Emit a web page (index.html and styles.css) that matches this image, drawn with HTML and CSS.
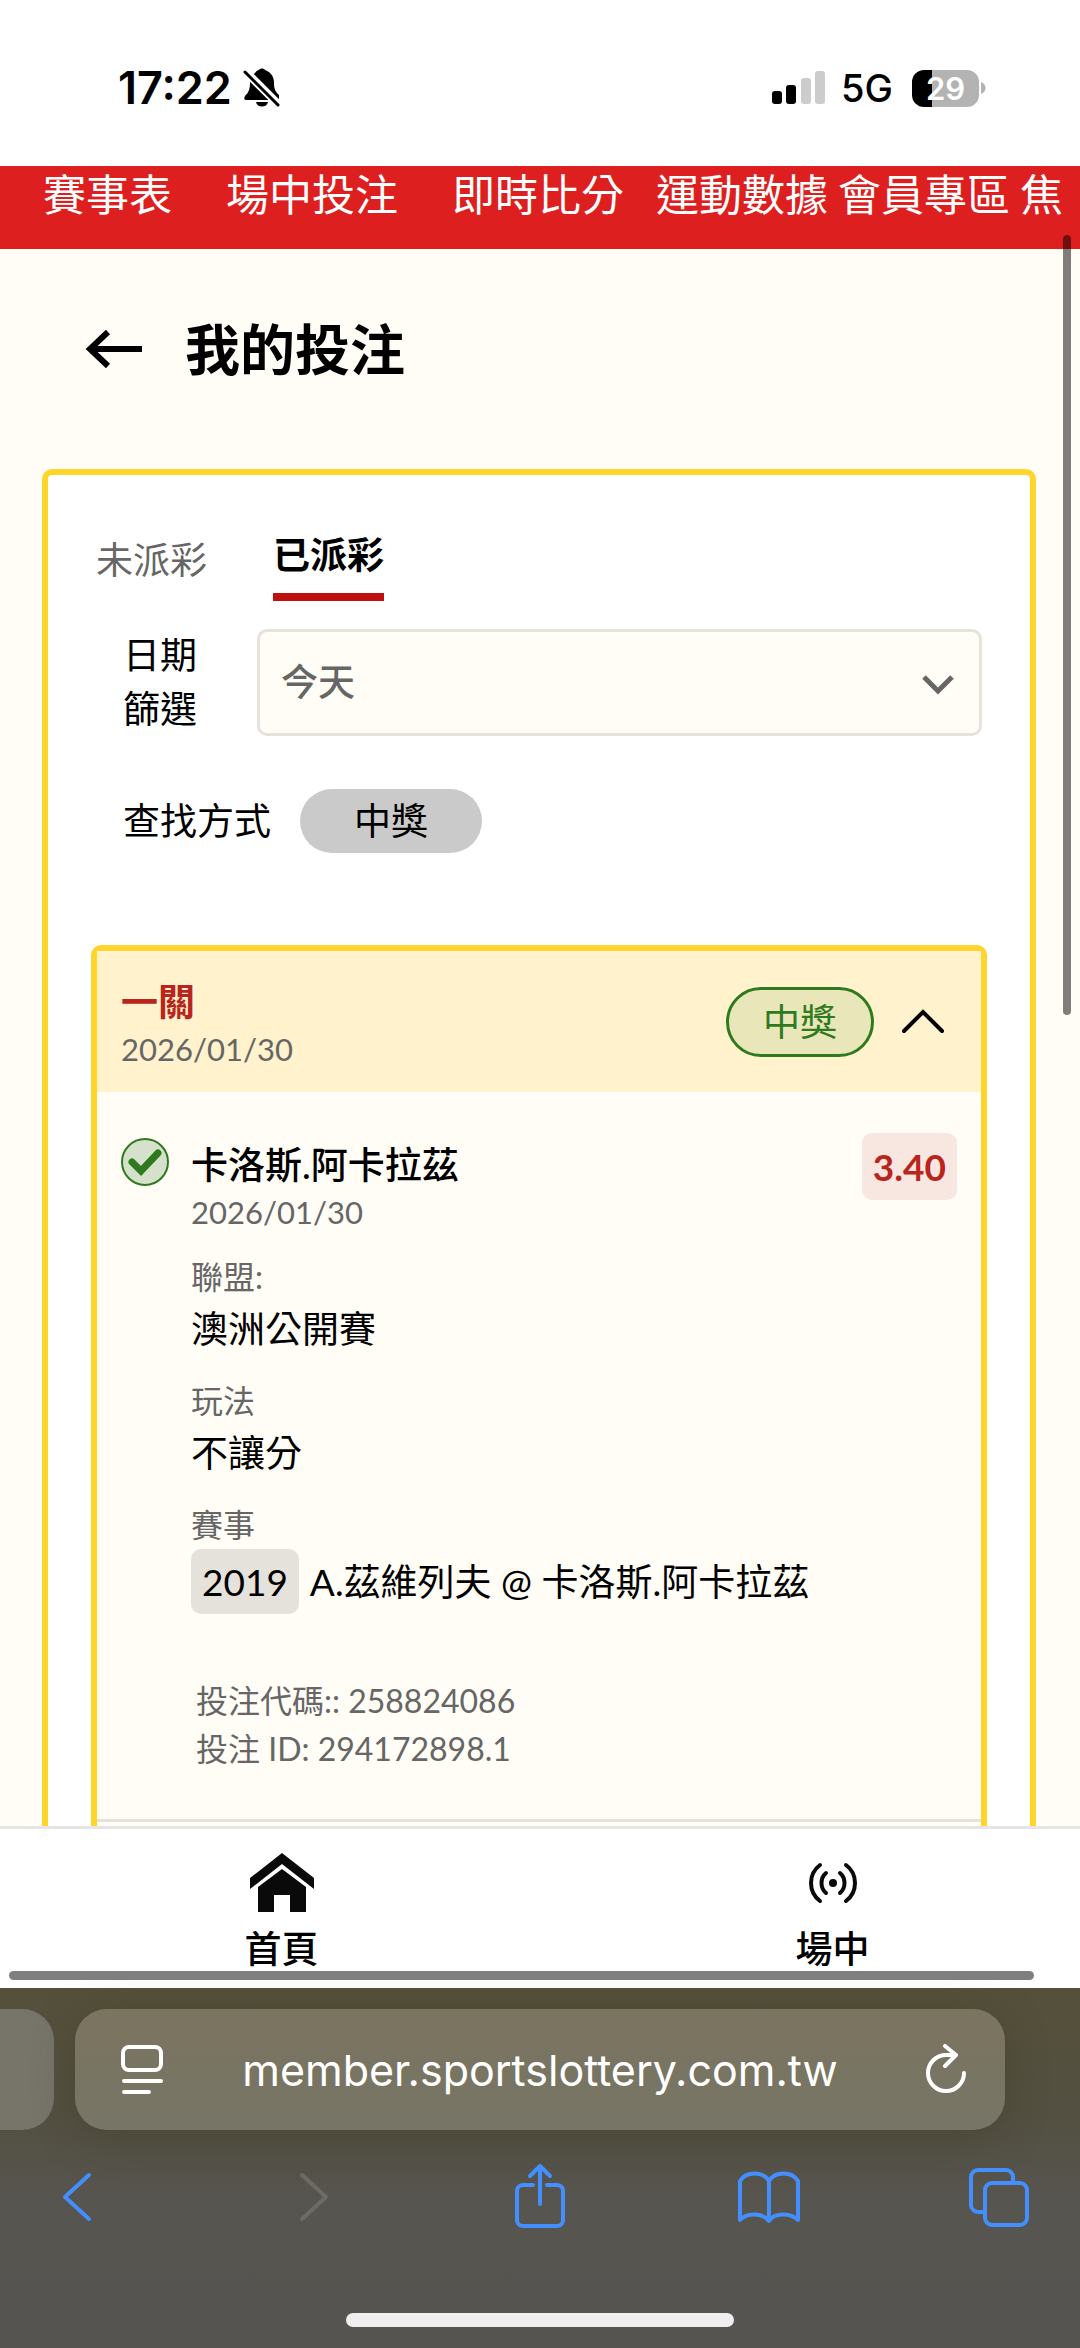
FILE: index.html
```html
<!DOCTYPE html>
<html lang="zh-Hant">
<head>
<meta charset="utf-8">
<meta name="viewport" content="width=device-width, initial-scale=1">
<title>我的投注</title>
<link rel="stylesheet" href="styles.css">
</head>
<body>
<div class="screen">
  <header class="status">
    <div class="status-left">
      <span class="time">17:22</span>
      <svg class="bell" width="38" height="40" viewBox="0 0 38 40" aria-hidden="true">
        <path d="M12 5C13 3 15 2 16 2c1-2 5-2 6 0 6 2 9 7 9 13 0 7 2 9 5 12v5H3c-2 0-2-2-1-4 3-3 5-6 5-13 0-4 1-7 5-10z"/>
        <path d="M13 34h12c-1 6-11 6-12 0z"/>
        <path d="M0 1L36 37" stroke="#fff" stroke-width="8"/>
        <path d="M2 4L35 37" stroke="#000" stroke-width="3" stroke-linecap="round"/>
      </svg>
    </div>
    <div class="status-right">
      <svg width="53" height="34" viewBox="0 0 53 34" aria-hidden="true">
        <rect x="0" y="20" width="10" height="13" rx="3"/>
        <rect x="14" y="14" width="10" height="19" rx="3"/>
        <rect x="29" y="7" width="10" height="26" rx="3" fill="#ccc"/>
        <rect x="43" y="0" width="10" height="33" rx="3" fill="#ccc"/>
      </svg>
      <span class="network">5G</span>
      <span class="battery">29</span>
      <svg class="battery-cap" width="5" height="12" viewBox="0 0 5 12" aria-hidden="true"><path d="M0 0c6 2 6 10 0 12z" fill="#b3b3b3"/></svg>
    </div>
  </header>

  <main class="page">
    <nav class="topnav">
      <a class="wide" href="#">賽事表</a>
      <a class="wide" href="#">場中投注</a>
      <a class="mid" href="#">即時比分</a>
      <a href="#">運動數據</a>
      <a href="#">會員專區</a>
      <a href="#">焦</a>
    </nav>

    <div class="title-row">
      <button class="plain" type="button" aria-label="返回">
        <svg width="58" height="40" viewBox="0 0 58 40" fill="none" stroke="#000" stroke-width="6" aria-hidden="true"><path d="M57 20H5M23 3L5 20l18 17"/></svg>
      </button>
      <h1>我的投注</h1>
    </div>

    <section class="card">
      <div class="tabs" role="tablist">
        <button class="tab" type="button" role="tab">未派彩</button>
        <button class="tab active" type="button" role="tab" aria-selected="true">已派彩</button>
      </div>

      <form class="filters">
        <div class="date-row">
          <label for="range">日期篩選</label>
          <div class="select-wrap">
            <select id="range"><option>今天</option></select>
            <svg class="select-arrow" width="32" height="20" viewBox="0 0 32 20" fill="none" stroke="#666" stroke-width="5" aria-hidden="true"><path d="M2 2l14 14L30 2"/></svg>
          </div>
        </div>
        <div class="mode-row">
          <span>查找方式</span>
          <button class="chip" type="button">中獎</button>
        </div>
      </form>

      <article class="bet">
        <header class="bet-head">
          <div class="bet-title">
            <h2>一關</h2>
            <p class="date">2026/01/30</p>
          </div>
          <span class="badge-win">中獎</span>
          <button class="plain" type="button" aria-label="收合">
            <svg width="42" height="26" viewBox="0 0 42 26" fill="none" stroke="#000" stroke-width="4" stroke-linecap="round" aria-hidden="true"><path d="M2 22L21 3l19 19"/></svg>
          </button>
        </header>
        <div class="bet-body">
          <svg class="check" width="48" height="48" viewBox="0 0 48 48" aria-hidden="true">
            <circle cx="24" cy="24" r="23" fill="#d5e1ca" stroke="#2f7a1e" stroke-width="2"/>
            <path d="M11 24l9 9 17-18" fill="none" stroke="#2f7a1e" stroke-width="7" stroke-linecap="round"/>
          </svg>
          <div class="details">
            <h3>卡洛斯.阿卡拉茲</h3>
            <p class="date">2026/01/30</p>
            <dl>
              <dt>聯盟:</dt>
              <dd>澳洲公開賽</dd>
              <dt>玩法</dt>
              <dd>不讓分</dd>
              <dt>賽事</dt>
              <dd class="match"><span class="match-no">2019</span><span>A.茲維列夫 @ 卡洛斯.阿卡拉茲</span></dd>
            </dl>
            <div class="codes">
              <p>投注代碼:: 258824086</p>
              <p>投注 ID: 294172898.1</p>
            </div>
          </div>
          <span class="odds">3.40</span>
        </div>
        <div class="bet-foot"></div>
      </article>
    </section>
  </main>

  <nav class="bottomnav">
    <a href="#">
      <svg width="66" height="60" viewBox="0 0 66 60" fill="#0a0a0a" aria-hidden="true"><path d="M1 25L33 0l32 25v11L33 11 1 36z"/><path d="M33 16L57 34v25H41V42H25v17H9V34z"/></svg>
      <span>首頁</span>
    </a>
    <a href="#">
      <svg width="50" height="60" viewBox="0 0 50 60" fill="none" stroke="#0a0a0a" stroke-width="4" stroke-linecap="round" aria-hidden="true"><circle cx="25" cy="30" r="4" fill="#0a0a0a" stroke="none"/><path d="M18 20c-6 5-6 15 0 20M32 20c6 5 6 15 0 20M12 12c-12 9-12 27 0 36M38 12c12 9 12 27 0 36"/></svg>
      <span>場中</span>
    </a>
  </nav>

  <footer class="browser">
    <div class="address-row">
      <div class="prev-tab"></div>
      <div class="address">
        <button class="plain" type="button" aria-label="網頁選單">
          <svg width="42" height="50" viewBox="0 0 42 50" fill="none" stroke="#fff" stroke-width="4" stroke-linecap="round" aria-hidden="true"><rect x="2" y="2" width="38" height="23" rx="6"/><path d="M3 36h37M3 47h25"/></svg>
        </button>
        <input type="text" value="member.sportslottery.com.tw" aria-label="網址">
        <button class="plain" type="button" aria-label="重新載入">
          <svg width="42" height="52" viewBox="0 0 42 52" fill="none" stroke="#fff" stroke-width="4" stroke-linecap="round" stroke-linejoin="round" aria-hidden="true"><path d="M39 29A18 18 0 1 1 21 11h10M20 2l11 9-11 11"/></svg>
        </button>
      </div>
    </div>
    <div class="toolbar">
      <button class="plain" type="button" aria-label="上一頁"><svg viewBox="0 0 64 72"><path d="M44 14L20 36l24 22"/></svg></button>
      <button class="plain off" type="button" aria-label="下一頁"><svg viewBox="0 0 64 72"><path d="M26 14l24 22-24 22"/></svg></button>
      <button class="plain" type="button" aria-label="分享"><svg viewBox="0 0 64 72"><path d="M27 24H17a6 6 0 0 0-6 6v29a6 6 0 0 0 6 6h34a6 6 0 0 0 6-6V30a6 6 0 0 0-6-6H41M34 43V5M24 15L34 5l10 10"/></svg></button>
      <button class="plain" type="button" aria-label="書籤"><svg viewBox="0 0 64 72"><path d="M32 20v40C26 52 10 51 3 59V20C9 10 26 10 32 20C38 10 55 10 61 20v39C53 51 37 52 32 60"/></svg></button>
      <button class="plain" type="button" aria-label="分頁"><svg viewBox="0 0 64 72"><rect x="18" y="22" width="42" height="42" rx="7"/><path d="M17 51h-6a7 7 0 0 1-7-7V16a7 7 0 0 1 7-7h28a7 7 0 0 1 7 7v5"/></svg></button>
    </div>
    <div class="home-indicator"></div>
  </footer>
  <div class="scroll-y"></div>
  <div class="scroll-x"></div>
</div>
</body>
</html>
```
FILE: styles.css
```css
* { box-sizing: border-box; }

body {
  margin: 0;
  font-family: Lato, "Noto Sans CJK TC", sans-serif;
  font-size: 37px;
  line-height: 54px;
  color: #000;
}

h1, h2, h3, p, dl, dd { margin: 0; }
a { color: inherit; text-decoration: none; }
svg { display: block; flex: none; }
button, select, input { font: inherit; color: inherit; margin: 0; }

.plain {
  display: block;
  padding: 0;
  border: 0;
  background: none;
}

.screen {
  position: relative;
  display: flex;
  flex-direction: column;
  height: 100vh;
  overflow: hidden;
  background: #fffdf6;
}

/* Status bar */
.status {
  display: flex;
  justify-content: space-between;
  align-items: center;
  padding: 56px 94px 46px 118px;
  font-family: Inter, sans-serif;
  line-height: 64px;
  background: #fff;
}
.status-left, .status-right { display: flex; align-items: center; }
.status-left { gap: 11px; }
.time { font-size: 45px; font-weight: 600; }
.network { margin: 0 19px 0 16px; font-size: 38px; font-weight: 500; }
.battery {
  width: 67px;
  border-radius: 12px;
  background: linear-gradient(90deg, #000 20px, #b3b3b3 20px);
  color: #fff;
  font-size: 31px;
  font-weight: 600;
  line-height: 37px;
  text-align: center;
}
.battery-cap { margin-left: 2px; }

/* Page */
.page { flex: 1; min-height: 0; overflow: hidden; }

.topnav {
  display: flex;
  gap: 10px;
  padding: 0 0 25px 43px;
  overflow: hidden;
  background: #de1f1f;
  color: #fff;
  font-size: 43px;
  line-height: 58px;
  white-space: nowrap;
}
.topnav a { flex: none; }
.topnav .wide { margin-right: 44px; }
.topnav .mid { margin-right: 22px; }

.title-row {
  display: flex;
  align-items: center;
  gap: 42px;
  height: 200px;
  padding-left: 85px;
}
h1 { font-size: 55px; font-weight: 700; }

.card {
  margin: 20px 44px 0 42px;
  padding-top: 53px;
  border: 6px solid #ffd52b;
  border-radius: 10px;
  background: #fff;
}

.tabs {
  display: flex;
  align-items: flex-end;
  gap: 66px;
  padding-left: 48px;
}
.tab {
  padding: 0 0 14px;
  border: 0;
  background: none;
  color: #666;
}
.tab.active {
  padding-bottom: 11px;
  border-bottom: 8px solid #bf1010;
  color: #000;
  font-weight: 700;
}

.filters { padding: 27px 48px 0 75px; }
.date-row { display: flex; align-items: center; gap: 59px; }
.date-row label { width: 75px; }
.select-wrap { position: relative; flex: 1; }
select {
  display: block;
  width: 100%;
  height: 107px;
  padding: 0 21px;
  border: 3px solid #e5e3db;
  border-radius: 10px;
  background: #fffdf6;
  color: #666;
  font-weight: 500;
  appearance: none;
}
.select-arrow { position: absolute; right: 28px; top: 46px; pointer-events: none; }

.mode-row { display: flex; align-items: center; gap: 29px; margin-top: 53px; }
.chip {
  padding: 5px 54px;
  border: 0;
  border-radius: 32px;
  background: #cacaca;
}

/* Bet slip */
.bet {
  margin: 92px 43px 0;
  border: 6px solid #ffd52b;
  border-radius: 10px;
  background: #fffdf6;
}
.bet-head {
  display: flex;
  align-items: center;
  gap: 28px;
  padding: 24px 37px 23px 24px;
  background: #fff2cc;
}
.bet-title { flex: 1; }
h2 { color: #b9251c; font-size: 37px; font-weight: 700; }
.date { color: #666; font-size: 31px; line-height: 40px; }
.badge-win {
  padding: 5px 34px;
  border: 3px solid #2f7a1e;
  border-radius: 35px;
  background: #e9e6b9;
  color: #2f7a1e;
}

.bet-body {
  display: flex;
  align-items: flex-start;
  gap: 22px;
  padding: 41px 24px 46px;
}
.check, .details { margin-top: 5px; }
.details { flex: 1; }
h3 { font-size: 37px; font-weight: 500; }
.odds {
  padding: 6px 11px;
  border-radius: 10px;
  background: #f8e6e1;
  color: #b9251c;
  font-weight: 700;
  line-height: 55px;
}
dt { margin-top: 21px; color: #666; font-size: 32px; line-height: 48px; }
dd { line-height: 55px; }
.match { display: flex; gap: 11px; line-height: 65px; }
.match-no { padding: 0 11px; border-radius: 10px; background: #e5e2dc; }
.codes { margin: 63px 0 0 5px; color: #666; font-size: 32px; line-height: 48px; }
.bet-foot { height: 200px; border-top: 3px solid #e5e3db; }

/* Bottom navigation */
.bottomnav {
  display: flex;
  padding: 24px 0 12px 6px;
  border-top: 3px solid #e5e5e5;
  overflow: hidden;
  background: #fff;
  font-weight: 500;
}
.bottomnav a {
  flex: 0 0 calc(50% + 14px);
  display: flex;
  flex-direction: column;
  align-items: center;
  gap: 9px;
}

/* Browser chrome */
.browser {
  padding: 21px 0;
  background: linear-gradient(#54503a, #535041 35%, #575550 60%, #565450);
}
.address-row { display: flex; gap: 21px; padding-right: 75px; }
.prev-tab {
  width: 54px;
  border-radius: 0 32px 32px 0;
  background: #77756a;
}
.address {
  flex: 1;
  display: flex;
  align-items: center;
  height: 121px;
  padding: 0 38px 0 46px;
  border-radius: 32px;
  background: linear-gradient(#7b745f, #777566);
  box-shadow: 0 8px 40px rgba(60, 55, 35, 0.4);
}
.address input {
  flex: 1;
  min-width: 0;
  padding: 0 8px 0 0;
  border: 0;
  background: none;
  color: #fff;
  font-family: Inter, sans-serif;
  font-size: 43px;
  text-align: center;
}
.toolbar {
  display: flex;
  justify-content: space-between;
  padding: 31px 49px 80px 45px;
}
.toolbar svg {
  width: 64px;
  height: 72px;
  fill: none;
  stroke: #448fff;
  stroke-width: 4;
  stroke-linecap: round;
  stroke-linejoin: round;
}
.toolbar .off svg { stroke: #6c6b66; }
.home-indicator {
  width: 36%;
  height: 14px;
  margin: 0 auto;
  border-radius: 7px;
  background: #eee;
}

/* Scroll indicators lie over the page */
.scroll-y, .scroll-x { position: absolute; border-radius: 5px; background: rgba(0, 0, 0, 0.5); }
.scroll-y { top: 10%; right: 9px; width: 8px; height: 780px; }
.scroll-x { bottom: 368px; left: 9px; right: 46px; height: 9px; }
```
